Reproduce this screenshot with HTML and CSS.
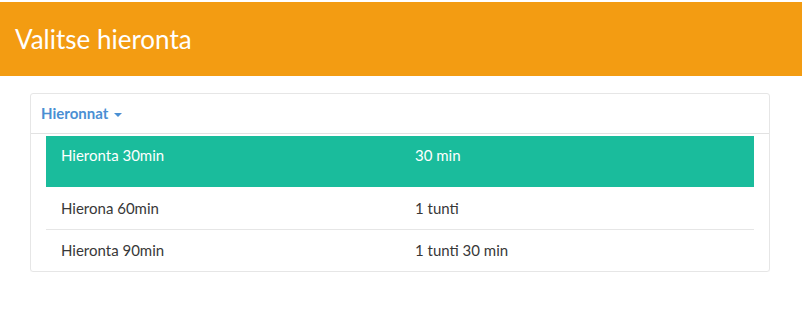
FILE: index.html
```html
<!DOCTYPE html>
<html lang="fi">
<head>
	<meta charset="UTF-8">
	<title>Valitse hieronta</title>
	<link rel="stylesheet" href="styles.css">
</head>
<body>
	<header class="topbar">
		<h1>Valitse hieronta</h1>
	</header>
	<div class="panel">
		<div class="panel-heading">
			<a class="dropdown-toggle" href="#">Hieronnat <span class="caret"></span></a>
		</div>
		<div class="panel-body">
			<table class="massages">
				<tr class="row-first active">
					<td>Hieronta 30min</td>
					<td>30 min</td>
				</tr>
				<tr class="row-second">
					<td>Hierona 60min</td>
					<td>1 tunti</td>
				</tr>
				<tr class="row-last">
					<td>Hieronta 90min</td>
					<td>1 tunti 30 min</td>
				</tr>
			</table>
		</div>
	</div>
</body>
</html>
```

FILE: styles.css
```css
body {
	font-family: Lato, "Open Sans", Arial, sans-serif;
	font-size: 15px;
	line-height: 21px;
	color: #383838;
	background-color: #fff;
	margin: 0;
	padding: 2px 0 0 0;
}
.topbar {
	height: 74px;
	background-color: #f39c12;
	padding: 0 15px;
	display: flex;
	align-items: center;
}
.topbar h1 {
	margin: 0;
	color: #fff;
	font-size: 26px;
	font-weight: normal;
	line-height: normal;
}
.panel {
	width: 738px;
	margin: 17px 0 0 30px;
	border: 1px solid #e6e6e6;
	border-radius: 3px;
	box-shadow: 0 1px 1px rgba(0,0,0,0.03);
}
.panel-heading {
	height: 40px;
	box-sizing: border-box;
	padding: 9px 10px 10px;
	border-bottom: 1px solid #e2e2e2;
}
.dropdown-toggle {
	color: #4a8fd3;
	font-weight: bold;
	text-decoration: none;
}
.caret {
	display: inline-block;
	width: 0;
	height: 0;
	margin-left: 2px;
	vertical-align: middle;
	border-top: 4px solid #4a8fd3;
	border-left: 4px solid transparent;
	border-right: 4px solid transparent;
}
.panel-body {
	padding: 2px 15px 0;
}
.massages {
	width: 100%;
	border-collapse: collapse;
	table-layout: fixed;
}
.massages td {
	padding: 10px 15px 10px;
	vertical-align: top;
}
.row-first td {
	padding-top: 9px;
	padding-bottom: 21px;
}
.row-second td {
	padding-top: 11px;
	padding-bottom: 10px;
	border-bottom: 1px solid #e6e6e6;
}
.massages .active td {
	background-color: #1abc9c;
	color: #fff;
}
```
